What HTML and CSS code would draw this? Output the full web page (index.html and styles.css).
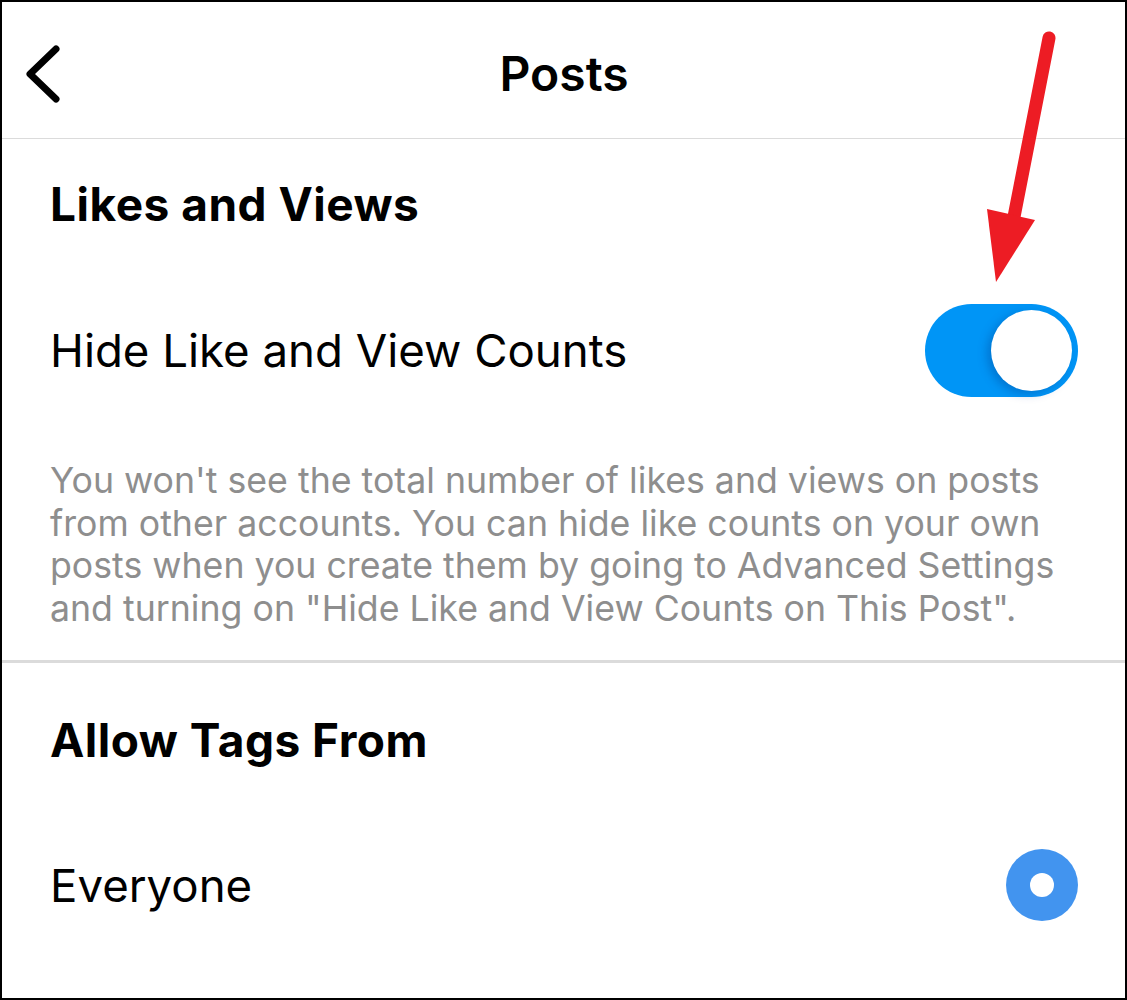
FILE: index.html
```html
<!DOCTYPE html>
<html lang="en">
<head>
    <meta charset="UTF-8">
    <meta name="viewport" content="width=device-width, initial-scale=1.0">
    <title>Posts</title>
    <link rel="stylesheet" href="styles.css">
</head>
<body>
    <div class="screen">
        <div class="topbar">
            <button class="back" aria-label="Back">
                <svg width="40" height="60" viewBox="0 0 40 60">
                    <path d="M32 6 L 6 31 L 32 56" fill="none" stroke="#000" stroke-width="7" stroke-linecap="round" stroke-linejoin="round"/>
                </svg>
            </button>
            <div class="title">Posts</div>
            <div class="spacer"></div>
        </div>

        <div class="group">
            <div class="group-title">Likes and Views</div>
            <div class="row row-toggle">
                <span class="label">Hide Like and View Counts</span>
                <div class="toggle on"><span class="knob"></span></div>
            </div>
            <p class="note">You won't see the total number of likes and views on posts<br>from other accounts. You can hide like counts on your own<br>posts when you create them by going to Advanced Settings<br>and turning on "Hide Like and View Counts on This Post".</p>
        </div>

        <div class="group">
            <div class="group-title second">Allow Tags From</div>
            <div class="row row-radio">
                <span class="label">Everyone</span>
                <span class="radio checked"></span>
            </div>
        </div>

        <!-- annotation arrow drawn over the screenshot -->
        <svg class="pointer" width="1127" height="1000" viewBox="0 0 1127 1000">
            <line x1="1049" y1="38" x2="1013" y2="222" stroke="#ed1c24" stroke-width="13" stroke-linecap="round"/>
            <polygon points="987,209 1035,220 996,282" fill="#ed1c24"/>
        </svg>
    </div>
</body>
</html>
```

FILE: styles.css
```css
body {
    margin: 0;
    background: #fff;
    font-family: Inter, "Noto Sans", sans-serif;
    color: #000;
}
.screen {
    position: relative;
    width: 1127px;
    height: 1000px;
    box-sizing: border-box;
    border: 2px solid #000;
    overflow: hidden;
    background: #fff;
}
.topbar {
    height: 137px;
    box-sizing: border-box;
    border-bottom: 1px solid #dbdbdb;
    display: grid;
    grid-template-columns: 120px 1fr 120px;
    align-items: center;
}
.back {
    background: none;
    border: none;
    padding: 0 0 0 22px;
    display: flex;
    align-items: center;
    height: 60px;
    margin-top: 6px;
    cursor: pointer;
}
.title {
    text-align: center;
    font-size: 48px;
    font-weight: 600;
    margin-top: 6px;
    margin-left: 1px;
}
.group {
    padding: 0 47px 0 48px;
}
.group + .group {
    border-top: 3px solid #dbdbdb;
}
.group-title {
    height: 130px;
    display: flex;
    align-items: center;
    font-size: 46px;
    font-weight: 700;
    letter-spacing: 0.5px;
}
.group-title.second {
    height: 154px;
}
.row {
    display: flex;
    align-items: center;
    justify-content: space-between;
}
.row-toggle {
    height: 162px;
}
.row-radio {
    height: 136px;
}
.label {
    font-size: 45.6px;
    font-weight: 400;
}
.toggle {
    width: 153px;
    height: 93px;
    border-radius: 47px;
    background: #0095f6;
    position: relative;
}
.toggle .knob {
    position: absolute;
    top: 6px;
    right: 6px;
    width: 81px;
    height: 81px;
    border-radius: 50%;
    background: #fff;
    box-shadow: -4px 3px 10px rgba(0, 60, 140, 0.35);
}
.note {
    margin: 0;
    padding: 28px 0 31px;
    font-size: 35.7px;
    line-height: 42.5px;
    color: #8e8e8e;
    white-space: nowrap;
}
.radio {
    width: 72px;
    height: 72px;
    border-radius: 50%;
    background: #4294ef;
    display: flex;
    align-items: center;
    justify-content: center;
}
.radio.checked::after {
    content: "";
    width: 24px;
    height: 24px;
    border-radius: 50%;
    background: #fff;
}
.pointer {
    position: absolute;
    top: -2px;
    left: -2px;
    pointer-events: none;
}
```
